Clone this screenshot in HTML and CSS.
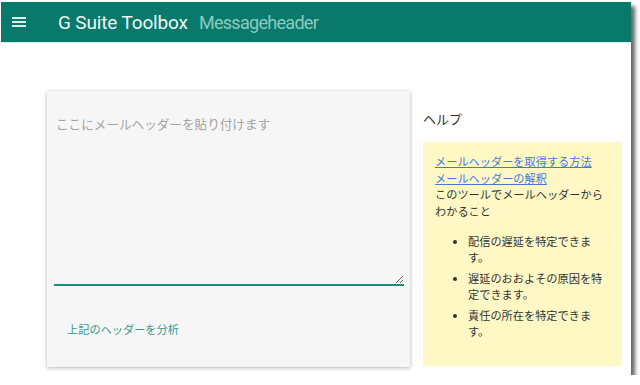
FILE: index.html
```html
<!DOCTYPE html>
<html lang="ja">
<head>
    <meta charset="UTF-8">
    <meta name="viewport" content="width=device-width, initial-scale=1.0">
    <title>G Suite Toolbox - Messageheader</title>
    <link rel="stylesheet" href="styles.css">
</head>
<body>

    <div class="page">
        <!-- Top bar -->
        <header class="topbar">
            <svg class="menu-icon" width="14" height="10" viewBox="0 0 14 10">
                <rect x="0" y="0" width="14" height="2" fill="#dcefeb"/>
                <rect x="0" y="4" width="14" height="2" fill="#dcefeb"/>
                <rect x="0" y="8" width="14" height="2" fill="#dcefeb"/>
            </svg>
            <span class="brand">G Suite Toolbox</span>
            <span class="app-name">Messageheader</span>
        </header>

        <div class="main">
            <!-- Input card -->
            <div class="card">
                <textarea class="header-input" placeholder="ここにメールヘッダーを貼り付けます"></textarea>
                <button type="button" class="analyze-btn">上記のヘッダーを分析</button>
            </div>

            <!-- Help -->
            <div class="help">
                <h2>ヘルプ</h2>
                <div class="help-box">
                    <p>
                        <a href="#">メールヘッダーを取得する方法</a><br>
                        <a href="#">メールヘッダーの解釈</a><br>
                        このツールでメールヘッダーからわかること
                    </p>
                    <ul>
                        <li>配信の遅延を特定できます。</li>
                        <li>遅延のおおよその原因を特定できます。</li>
                        <li>責任の所在を特定できます。</li>
                    </ul>
                </div>
            </div>
        </div>
    </div>

</body>
</html>
```

FILE: styles.css
```css
body {
    margin: 0;
    background-color: #fff;
    font-family: "Noto Sans CJK JP", "Liberation Sans", sans-serif;
    overflow: hidden;
}

.page {
    margin: 2px 0 0 1px;
    width: 630px;
    height: 373px;
    background: #fff;
    box-shadow: 4px 4px 4px rgba(0, 0, 0, 0.6);
}

.topbar {
    height: 40px;
    background-color: #08796b;
    border-bottom: 1px solid #cdeeea;
    display: flex;
    align-items: center;
}

.menu-icon {
    margin-left: 11px;
    margin-right: 32px;
}

.brand {
    font-family: Roboto, sans-serif;
    font-size: 19px;
    letter-spacing: -0.15px;
    color: #eef7f5;
}

.app-name {
    font-family: Roboto, sans-serif;
    font-size: 18px;
    letter-spacing: -0.7px;
    color: #8ccabf;
    margin-left: 11px;
}

.main {
    display: flex;
    gap: 13px;
    padding: 48px 0 0 46px;
}

.card {
    width: 363px;
    height: 276px;
    box-sizing: border-box;
    padding: 18px 6px 0 7px;
    background-color: #f6f6f6;
    box-shadow: 0 1px 4px rgba(0, 0, 0, 0.3);
}

.header-input {
    display: block;
    width: 100%;
    height: 177px;
    box-sizing: border-box;
    padding: 7px 2px;
    margin: 0;
    background: transparent;
    border: none;
    border-bottom: 2px solid #1e8a7f;
    font-family: inherit;
    font-size: 12.6px;
    line-height: 16px;
    resize: vertical;
    outline: none;
}

.header-input::placeholder {
    color: #a3a3a3;
}

.analyze-btn {
    margin-top: 30px;
    padding: 6px 13px;
    background: none;
    border: none;
    font-family: inherit;
    font-size: 11.2px;
    line-height: 14px;
    color: #38978c;
    cursor: pointer;
}

.help {
    width: 199px;
}

.help h2 {
    margin: 18px 0 13px;
    font-size: 13px;
    line-height: 20px;
    font-weight: normal;
    color: #333;
}

.help-box {
    height: 224px;
    box-sizing: border-box;
    padding: 11px 12px;
    background-color: #fff8c5;
    font-size: 11.2px;
    color: #333;
}

.help-box p {
    margin: 0;
    line-height: 16.5px;
}

.help-box a {
    color: #4479dc;
}

.help-box ul {
    margin: 14px 0 0;
    padding-left: 33px;
    line-height: 16px;
}

.help-box li {
    margin-bottom: 5px;
}
```
